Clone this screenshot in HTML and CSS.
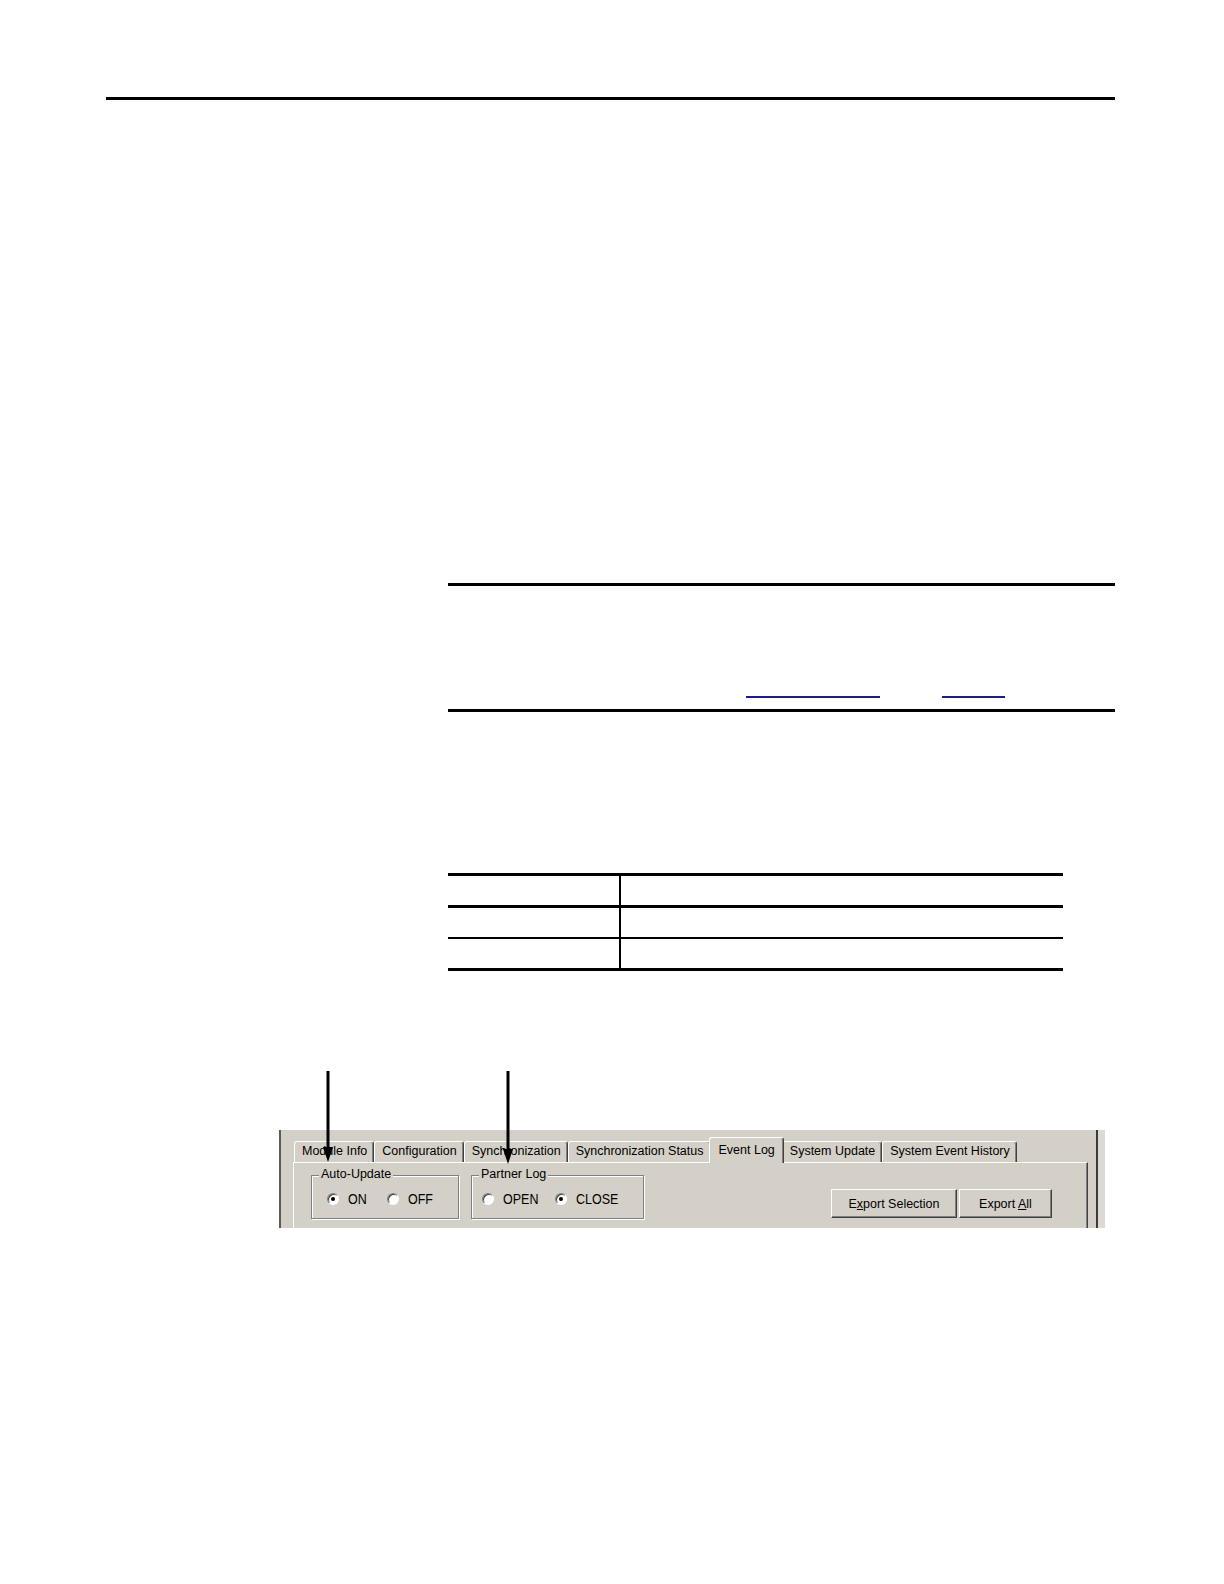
FILE: index.html
```html
<!DOCTYPE html>
<html lang="en">
<head>
<meta charset="utf-8">
<title>Event Log</title>
<link rel="stylesheet" href="styles.css">
</head>
<body>
<div class="page">
  <div class="top-rule"></div>

  <div class="note">
    <div class="note-links">
      <span class="link-line link-a"></span>
      <span class="link-line link-b"></span>
    </div>
  </div>

  <div class="tbl">
    <div class="tr"><div class="td first"></div><div class="td"></div></div>
    <div class="tr r2"><div class="td first"></div><div class="td"></div></div>
    <div class="tr r3"><div class="td first"></div><div class="td"></div></div>
  </div>

  <div class="figure">
    <div class="window">
      <div class="tabs">
        <div class="tab">Module Info</div>
        <div class="tab">Configuration</div>
        <div class="tab">Synchronization</div>
        <div class="tab">Synchronization Status</div>
        <div class="tab active">Event Log</div>
        <div class="tab">System Update</div>
        <div class="tab">System Event History</div>
      </div>
      <div class="panel">
        <div class="group g1">
          <span class="group-label">Auto-Update</span>
          <div class="radios">
            <div class="opt"><span class="radio on"></span><span class="opt-text">ON</span></div>
            <div class="opt"><span class="radio"></span><span class="opt-text">OFF</span></div>
          </div>
        </div>
        <div class="group g2">
          <span class="group-label">Partner Log</span>
          <div class="radios">
            <div class="opt"><span class="radio"></span><span class="opt-text">OPEN</span></div>
            <div class="opt"><span class="radio on"></span><span class="opt-text">CLOSE</span></div>
          </div>
        </div>
        <div class="buttons">
          <button class="btn btn-sel">E<u>x</u>port Selection</button>
          <button class="btn btn-all">Export <u>A</u>ll</button>
        </div>
      </div>
    </div>
    <svg class="arrows" width="1224" height="100" viewBox="0 0 1224 100" xmlns="http://www.w3.org/2000/svg">
      <line x1="328" y1="0" x2="328" y2="80" stroke="#000" stroke-width="3"/>
      <polygon points="323,76 333,76 328,91" fill="#000"/>
      <line x1="508" y1="0" x2="508" y2="82" stroke="#000" stroke-width="3"/>
      <polygon points="503,78 513,78 508,93" fill="#000"/>
    </svg>
  </div>
</div>
</body>
</html>
```

FILE: styles.css
```css
body {
  margin: 0;
  background: #fff;
  font-family: "Liberation Sans", Arial, sans-serif;
  color: #000;
}

.page {
  padding-top: 97px;
  padding-bottom: 200px;
}

.top-rule {
  margin-left: 106px;
  width: 1009px;
  height: 3px;
  background: #000;
}

/* note box */
.note {
  margin: 483px 0 0 448px;
  width: 667px;
  height: 123px;
  border-top: 3px solid #000;
  border-bottom: 3px solid #000;
}

.note-links {
  display: flex;
  padding-top: 110px;
}

.link-line {
  height: 2px;
  background: #1c1c8a;
}

.link-a {
  margin-left: 298px;
  width: 134px;
}

.link-b {
  margin-left: 62px;
  width: 63px;
}

/* table */
.tbl {
  margin: 161px 0 0 448px;
  width: 615px;
  border-top: 3px solid #000;
  border-bottom: 3px solid #000;
}

.tr {
  display: flex;
  height: 29px;
}

.tr.r2 {
  border-top: 3px solid #000;
}

.tr.r3 {
  border-top: 2px solid #000;
}

.td.first {
  width: 171px;
  border-right: 2px solid #000;
}

/* figure */
.figure {
  position: relative;
  margin-top: 100px;
  padding-top: 59px;
}

.arrows {
  position: absolute;
  left: 0;
  top: 0;
  z-index: 3;
  pointer-events: none;
}

.window {
  box-sizing: border-box;
  margin-left: 279px;
  width: 819px;
  height: 98px;
  background: #d4d0c8;
  border-left: 2px solid #5a5a5a;
  border-right: 2px solid #3a3a3a;
  box-shadow: 7px 0 0 #dcdad5;
  padding: 7px 0 0 12px;
  overflow: hidden;
  font-size: 12.5px;
}

.tabs {
  display: flex;
  align-items: flex-end;
  margin-left: 1px;
  height: 25px;
}

.tab {
  box-sizing: border-box;
  height: 21px;
  padding: 0 6px 0 7px;
  border: 1px solid;
  border-bottom: 0;
  border-color: #fff #404040 transparent #fff;
  box-shadow: inset -1px 0 0 #808080;
  border-radius: 3px 3px 0 0;
  line-height: 19px;
  white-space: nowrap;
  background: #d4d0c8;
}

.tab.active {
  height: 26px;
  margin: 0 -2px -1px;
  padding: 1px 8px 0 9px;
  line-height: 22px;
  position: relative;
  z-index: 1;
}

.panel {
  box-sizing: border-box;
  width: 795px;
  height: 200px;
  border: 1px solid;
  border-color: #fff #404040 #404040 #fff;
  box-shadow: inset -1px 0 0 #808080;
  display: flex;
  align-items: flex-start;
  padding-left: 17px;
}

.group {
  position: relative;
  box-sizing: border-box;
  margin-top: 12px;
  height: 44px;
  border: 1px solid #808080;
  box-shadow: 1px 1px 0 #fff, inset 1px 1px 0 #fff;
}

.g1 {
  width: 148px;
  padding: 14px 0 0 15px;
}

.g2 {
  width: 173px;
  margin-left: 12px;
  padding: 14px 0 0 10px;
}

.group-label {
  position: absolute;
  left: 7px;
  top: -9px;
  padding: 0 2px;
  background: #d4d0c8;
  line-height: 15px;
  white-space: nowrap;
}

.radios {
  display: flex;
  align-items: center;
  height: 18px;
}

.opt {
  display: flex;
  align-items: center;
  gap: 9px;
}

.g1 .opt:first-child {
  width: 60px;
}

.g2 .opt:first-child {
  width: 73px;
}

.radio {
  box-sizing: border-box;
  flex: none;
  width: 12px;
  height: 12px;
  border-radius: 50%;
  background: #fff;
  border: 1px solid;
  border-color: #808080 #fff #fff #808080;
  box-shadow: inset 1px 1px 0 #404040;
  display: flex;
  align-items: center;
  justify-content: center;
}

.radio.on::after {
  content: "";
  width: 4px;
  height: 4px;
  border-radius: 50%;
  background: #000;
}

.opt-text {
  display: inline-block;
  line-height: 18px;
  transform: scaleY(1.2);
}

.buttons {
  display: flex;
  gap: 2px;
  margin: 26px 35px 0 auto;
}

.btn {
  box-sizing: border-box;
  height: 29px;
  padding: 0;
  border: 1px solid;
  border-color: #fff #404040 #404040 #fff;
  box-shadow: inset -1px -1px 0 #808080;
  background: #d4d0c8;
  font-family: "Liberation Sans", Arial, sans-serif;
  font-size: 12.5px;
  color: #000;
}

.btn-sel {
  width: 126px;
}

.btn-all {
  width: 93px;
}
```
